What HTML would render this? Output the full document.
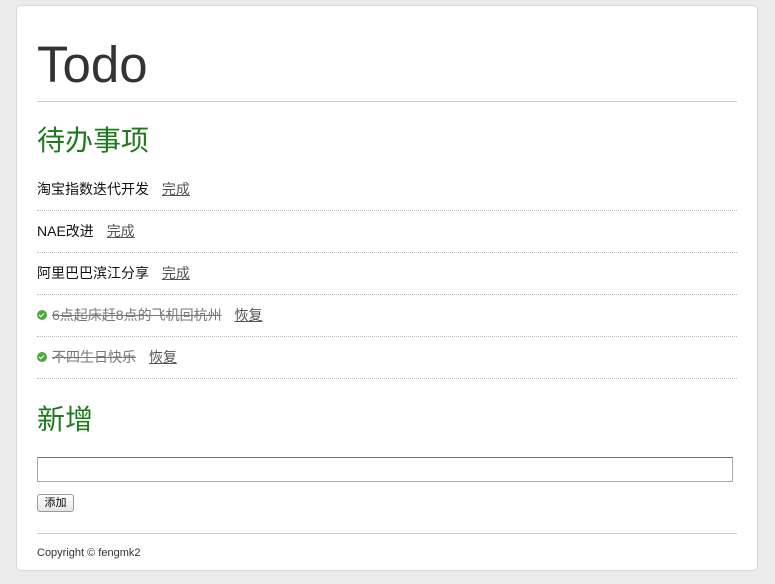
<!DOCTYPE html>
<html><head><meta charset="utf-8"><style>
body{margin:0;background:#ececec;font-family:"Liberation Sans","Noto Sans CJK SC",sans-serif;width:775px;height:584px;overflow:hidden}
.card{position:absolute;left:16px;top:5px;width:740px;height:564px;background:#fff;border:1px solid #d8d8d8;border-radius:5px}
.abs{position:absolute;white-space:nowrap}
h1{position:absolute;left:20px;top:31px;margin:0;font-size:51px;font-weight:normal;color:#333;line-height:56px}
.hr{position:absolute;left:20px;width:700px;height:1px;background:#ccc}
.h2{position:absolute;left:20px;margin:0;font-size:28px;font-weight:normal;color:#1d7b1d;line-height:32px}
.item{position:absolute;left:20px;width:700px;height:41px;border-bottom:1px dotted #bbb;font-size:14px;color:#111;line-height:16px}
.item span{position:absolute;white-space:nowrap}
.item a{color:#555;text-decoration:underline;margin-left:9px}
.done{color:#777;text-decoration:line-through}
.chk{position:absolute;left:0;width:10px;height:10px;border-radius:50%;background:#4caa3a}
.chk:after{content:"";position:absolute;left:3px;top:1.5px;width:2px;height:4px;border:solid #fff;border-width:0 1.5px 1.5px 0;transform:rotate(45deg)}
</style></head><body>
<div class="card">
<h1>Todo</h1>
<div class="hr" style="top:95px"></div>
<div class="h2" style="top:119px">待办事项</div>
<div class="item" style="top:163px"><span style="left:0;top:12px">淘宝指数迭代开发 <a>完成</a></span></div>
<div class="item" style="top:205px"><span style="left:0;top:12px">NAE改进 <a>完成</a></span></div>
<div class="item" style="top:247px"><span style="left:0;top:12px">阿里巴巴滨江分享 <a>完成</a></span></div>
<div class="item" style="top:289px"><div class="chk" style="top:15px"></div><span style="left:15px;top:12px"><span class="done" style="position:static">6点起床赶8点的飞机回杭州</span> <a>恢复</a></span></div>
<div class="item" style="top:331px"><div class="chk" style="top:15px"></div><span style="left:15px;top:12px"><span class="done" style="position:static">不四生日快乐</span> <a>恢复</a></span></div>
<div class="h2" style="top:398px">新增</div>
<div class="abs" style="left:20px;top:451px;width:694px;height:23px;border:1px solid #aaa;border-top-color:#777"></div>
<div class="abs" style="left:20px;top:488px;width:35px;height:16px;border:1px solid #999;border-radius:3px;background:linear-gradient(#fff,#e6e6e6);font-size:11px;text-align:center;line-height:16px">添加</div>
<div class="hr" style="top:527px"></div>
<div class="abs" style="left:20px;top:541px;font-size:11px;color:#333">Copyright © fengmk2</div>
</div>
</body></html>
